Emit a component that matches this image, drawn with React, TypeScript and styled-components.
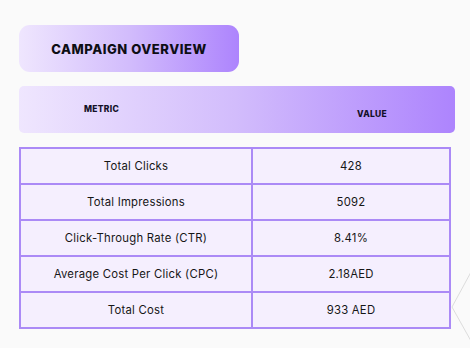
import React from 'react';
import styled, { createGlobalStyle } from 'styled-components';

const GlobalStyle = createGlobalStyle`
  html, body {
    margin: 0;
    padding: 0;
    background: #fafafa;
    font-family: Inter, "Noto Sans", sans-serif;
  }
`;

const Page = styled.div`
  position: relative;
  width: 470px;
  height: 348px;
  overflow: hidden;
  padding: 25px 0 0 19px;
  box-sizing: border-box;
`;

const TitleBox = styled.div`
  width: 220px;
  height: 47px;
  border-radius: 11px;
  background: linear-gradient(90deg, #efe6fe 0%, #d2bcfc 50%, #ad84fd 100%);
  display: flex;
  align-items: center;
  justify-content: center;
`;

const Title = styled.h1`
  margin: 0;
  font-size: 13px;
  font-weight: 800;
  letter-spacing: 0.55px;
  color: #0e0e14;
`;

const HeaderBar = styled.div`
  margin-top: 14px;
  width: 436px;
  height: 47px;
  border-radius: 5px;
  background: linear-gradient(90deg, #efe6fe 0%, #d2bcfc 50%, #ad84fd 100%);
  display: grid;
  grid-template-columns: 233px 1fr;
`;

const HeaderCell = styled.div<{ $offset: number; $indent: number }>`
  padding-top: ${p => p.$offset}px;
  padding-left: ${p => p.$indent}px;
  font-size: 8.5px;
  font-weight: 800;
  letter-spacing: 0.3px;
  color: #141028;
`;

const Table = styled.table`
  margin-top: 14px;
  width: 432px;
  border-collapse: collapse;
  background: #f5effe;
  table-layout: fixed;
`;

const Cell = styled.td<{ $wide?: boolean }>`
  width: ${p => (p.$wide ? '230px' : 'auto')};
  height: 34px;
  padding: 0;
  border: 2px solid #ab8af6;
  text-align: center;
  vertical-align: middle;
  font-size: 11.3px;
  letter-spacing: 0.25px;
  color: #161616;
`;

const Deco = styled.svg`
  position: absolute;
  left: 451px;
  top: 265px;
`;

const rows = [
  ['Total Clicks', '428'],
  ['Total Impressions', '5092'],
  ['Click-Through Rate (CTR)', '8.41%'],
  ['Average Cost Per Click (CPC)', '2.18AED'],
  ['Total Cost', '933 AED'],
];

export default function App() {
  return (
    <Page>
      <GlobalStyle />
      <TitleBox>
        <Title>CAMPAIGN OVERVIEW</Title>
      </TitleBox>
      <HeaderBar>
        <HeaderCell $offset={18} $indent={65}>METRIC</HeaderCell>
        <HeaderCell $offset={23} $indent={105}>VALUE</HeaderCell>
      </HeaderBar>
      <Table>
        <tbody>
          {rows.map(([label, value]) => (
            <tr key={label}>
              <Cell $wide>{label}</Cell>
              <Cell>{value}</Cell>
            </tr>
          ))}
        </tbody>
      </Table>
      <Deco width="20" height="80" viewBox="0 0 20 80">
        <polyline points="20,7 1,42 20,76" fill="none" stroke="#dcdcdc" strokeWidth="1" />
      </Deco>
    </Page>
  );
}
